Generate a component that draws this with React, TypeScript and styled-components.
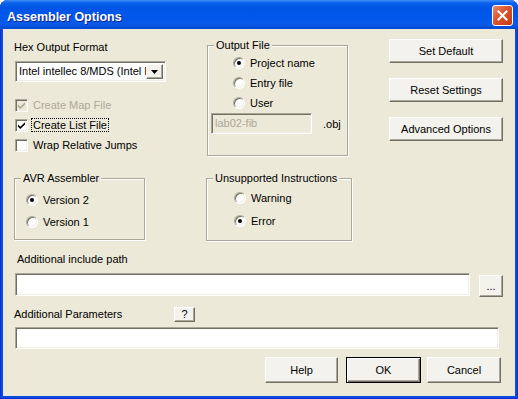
import React from "react";
import styled, { createGlobalStyle } from "styled-components";

const GlobalStyle = createGlobalStyle`
  html, body {
    margin: 0;
    padding: 0;
    background: #ffffff;
  }
  body {
    font-family: "Liberation Sans", Arial, sans-serif;
    font-size: 11px;
    color: #000;
  }
  * {
    box-sizing: border-box;
  }
`;

const Window = styled.div`
  width: 518px;
  height: 399px;
  display: flex;
  flex-direction: column;
  border-radius: 8px 8px 0 0;
  overflow: hidden;
  background: #0a4ce0;
  box-shadow: inset 1px 0 0 #0831d9, inset -1px 0 0 #0831d9, inset 0 -1px 0 #0831d9;
`;

const TitleBar = styled.div`
  height: 29px;
  flex-shrink: 0;
  display: flex;
  align-items: center;
  justify-content: space-between;
  padding: 2px 5px 0 7px;
  background: linear-gradient(
    to bottom,
    #3d8ff7 0px,
    #0a60ea 3px,
    #0055e5 8px,
    #0057ec 18px,
    #0a5ae8 24px,
    #0048d2 29px
  );
`;

const Title = styled.span`
  color: #fff;
  font-weight: bold;
  font-size: 12.5px;
  padding-top: 3px;
  text-shadow: 1px 1px 0 #0f1f8a;
`;

const CloseButton = styled.div`
  width: 21px;
  height: 21px;
  border: 1px solid #fff;
  border-radius: 3px;
  background: linear-gradient(135deg, #eb8a6c 0%, #d9542d 45%, #c63a13 100%);
  display: flex;
  align-items: center;
  justify-content: center;
`;

const Client = styled.div`
  flex: 1;
  margin: 0 3px 3px;
  background: #ece9d8;
  padding: 10px 14px 0 11px;
  display: flex;
  flex-direction: column;
`;

const TopGrid = styled.div`
  display: grid;
  grid-template-columns: 192px 183px 114px;
  row-gap: 16px;
  align-items: start;
`;

const Column = styled.div`
  display: flex;
  flex-direction: column;
`;

const Label = styled.div<{ $top?: number; $left?: number; $width?: number }>`
  line-height: 13px;
  margin-top: ${(p) => p.$top ?? 0}px;
  margin-left: ${(p) => p.$left ?? 0}px;
  ${(p) => (p.$width ? `width: ${p.$width}px; flex-shrink: 0;` : "")}
  white-space: nowrap;
`;

const sunken = `
  border: 1px solid;
  border-color: #aca899 #ffffff #ffffff #aca899;
  box-shadow: inset 1px 1px 0 #716f64, inset -1px -1px 0 #f1efe2;
`;

const raised = `
  border: 1px solid;
  border-color: #ffffff #716f64 #716f64 #ffffff;
  box-shadow: inset -1px -1px 0 #aca899;
  background: #f3f2ec;
`;

const SelectBox = styled.div`
  ${sunken}
  margin-top: 7px;
  margin-left: 1px;
  width: 151px;
  height: 21px;
  background: #fff;
  display: flex;
  align-items: stretch;
  padding: 2px;
`;

const SelectText = styled.div`
  flex: 1;
  overflow: hidden;
  white-space: nowrap;
  line-height: 15px;
  padding-left: 1px;
`;

const DropButton = styled.div`
  ${raised}
  width: 17px;
  display: flex;
  align-items: center;
  justify-content: center;
`;

const CheckList = styled.div`
  margin-top: 13px;
  display: flex;
  flex-direction: column;
`;

const CheckRow = styled.div`
  height: 20px;
  display: flex;
  align-items: center;
`;

const CheckBox = styled.span<{ $disabled?: boolean }>`
  ${sunken}
  width: 13px;
  height: 13px;
  margin-left: 1px;
  background: ${(p) => (p.$disabled ? "#ece9d8" : "#fff")};
  display: flex;
  align-items: center;
  justify-content: center;
  flex-shrink: 0;
`;

const OptionText = styled.span<{ $disabled?: boolean; $focused?: boolean }>`
  margin-left: 3px;
  padding: 0 1px;
  line-height: 12px;
  border: 1px dotted ${(p) => (p.$focused ? "#000" : "transparent")};
  color: ${(p) => (p.$disabled ? "#aca899" : "#000")};
  white-space: nowrap;
`;

const GroupBox = styled.fieldset<{ $width: number; $left?: number }>`
  margin: 0 0 0 ${(p) => p.$left ?? 0}px;
  padding: 0;
  width: ${(p) => p.$width}px;
  border: 1px solid #aca899;
  box-shadow: inset 1px 1px 0 #fff, 1px 1px 0 #fff;
  min-width: 0;
`;

const GroupTitle = styled.legend`
  margin-left: 6px;
  padding: 0 2px;
  line-height: 13px;
  background: #ece9d8;
`;

const GroupBody = styled.div<{ $pad: string }>`
  padding: ${(p) => p.$pad};
  display: flex;
  flex-direction: column;
`;

const RadioRow = styled.div<{ $indent: number; $height: number }>`
  height: ${(p) => p.$height}px;
  padding-left: ${(p) => p.$indent}px;
  display: flex;
  align-items: center;
`;

const Radio = styled.span<{ $checked?: boolean }>`
  width: 12px;
  height: 12px;
  border-radius: 50%;
  border: 1px solid;
  border-color: #aca899 #ffffff #ffffff #aca899;
  box-shadow: inset 1px 1px 0 #716f64, inset -1px -1px 0 #f1efe2;
  background: #fff;
  flex-shrink: 0;
  display: flex;
  align-items: center;
  justify-content: center;

  &::after {
    content: "";
    width: 4px;
    height: 4px;
    border-radius: 50%;
    background: ${(p) => (p.$checked ? "#000" : "transparent")};
  }
`;

const RadioText = styled.span`
  margin-left: 5px;
  line-height: 13px;
  white-space: nowrap;
`;

const FileRow = styled.div`
  display: flex;
  align-items: center;
  margin-left: 3px;
`;

const TextField = styled.div<{ $width: number; $height: number; $disabled?: boolean; $left?: number }>`
  ${sunken}
  width: ${(p) => p.$width}px;
  height: ${(p) => p.$height}px;
  margin-left: ${(p) => p.$left ?? 0}px;
  background: ${(p) => (p.$disabled ? "#ece9d8" : "#fff")};
  color: ${(p) => (p.$disabled ? "#aca899" : "#000")};
  padding: 3px 3px;
  line-height: 13px;
  flex-shrink: 0;
`;

const Suffix = styled.span`
  margin-left: 11px;
`;

const ButtonStack = styled.div`
  display: flex;
  flex-direction: column;
  gap: 15px;
`;

const Button = styled.div<{ $width: number; $height: number; $default?: boolean }>`
  ${raised}
  width: ${(p) => p.$width}px;
  height: ${(p) => p.$height}px;
  display: flex;
  align-items: center;
  justify-content: center;
  line-height: 13px;
  white-space: nowrap;
  flex-shrink: 0;
  ${(p) =>
    p.$default
      ? `border-color: #000;
         box-shadow: inset 1px 1px 0 #fff, inset -1px -1px 0 #716f64, inset -2px -2px 0 #aca899;`
      : ""}
`;

const Row = styled.div<{ $top: number; $gap?: number; $align?: string }>`
  display: flex;
  align-items: ${(p) => p.$align ?? "flex-start"};
  margin-top: ${(p) => p.$top}px;
  gap: ${(p) => p.$gap ?? 0}px;
`;

const SmallButtonWrap = styled.div`
  margin-top: 2px;
`;

const Footer = styled.div`
  display: flex;
  justify-content: flex-end;
  margin-top: 8px;
`;

const FooterGap = styled.span<{ $w: number }>`
  width: ${(p) => p.$w}px;
`;

const Check = ({ color }: { color: string }) => (
  <svg width="9" height="9" viewBox="0 0 9 9">
    <path d="M1 3.5 L3.3 5.8 L8 1.2 L8 3.4 L3.3 8 L1 5.7 Z" fill={color} />
  </svg>
);

export default function App() {
  return (
    <>
      <GlobalStyle />
      <Window>
        <TitleBar>
          <Title>Assembler Options</Title>
          <CloseButton>
            <svg width="11" height="11" viewBox="0 0 11 11">
              <path d="M1.5 1.5 L9.5 9.5 M9.5 1.5 L1.5 9.5" stroke="#fff" strokeWidth="2" strokeLinecap="square" />
            </svg>
          </CloseButton>
        </TitleBar>
        <Client>
          <TopGrid>
            <Column>
              <Label $top={2}>Hex Output Format</Label>
              <SelectBox>
                <SelectText>Intel intellec 8/MDS (Intel HEX)</SelectText>
                <DropButton>
                  <svg width="7" height="4" viewBox="0 0 7 4">
                    <path d="M0 0 H7 L3.5 4 Z" fill="#000" />
                  </svg>
                </DropButton>
              </SelectBox>
              <CheckList>
                <CheckRow>
                  <CheckBox $disabled>
                    <Check color="#aca899" />
                  </CheckBox>
                  <OptionText $disabled>Create Map File</OptionText>
                </CheckRow>
                <CheckRow>
                  <CheckBox>
                    <Check color="#000" />
                  </CheckBox>
                  <OptionText $focused>Create List File</OptionText>
                </CheckRow>
                <CheckRow>
                  <CheckBox />
                  <OptionText>Wrap Relative Jumps</OptionText>
                </CheckRow>
              </CheckList>
            </Column>

            <GroupBox $width={141} $left={1}>
              <GroupTitle>Output File</GroupTitle>
              <GroupBody $pad="1px 0 21px 0">
                <RadioRow $indent={25} $height={20}>
                  <Radio $checked />
                  <RadioText>Project name</RadioText>
                </RadioRow>
                <RadioRow $indent={25} $height={20}>
                  <Radio />
                  <RadioText>Entry file</RadioText>
                </RadioRow>
                <RadioRow $indent={25} $height={20}>
                  <Radio />
                  <RadioText>User</RadioText>
                </RadioRow>
                <FileRow>
                  <TextField $width={101} $height={21} $disabled>
                    lab02-fib
                  </TextField>
                  <Suffix>.obj</Suffix>
                </FileRow>
              </GroupBody>
            </GroupBox>

            <ButtonStack>
              <Button $width={114} $height={24}>Set Default</Button>
              <Button $width={114} $height={24}>Reset Settings</Button>
              <Button $width={114} $height={24}>Advanced Options</Button>
            </ButtonStack>

            <GroupBox $width={131}>
              <GroupTitle>AVR Assembler</GroupTitle>
              <GroupBody $pad="4px 0 6px 0">
                <RadioRow $indent={11} $height={22}>
                  <Radio $checked />
                  <RadioText>Version 2</RadioText>
                </RadioRow>
                <RadioRow $indent={11} $height={22}>
                  <Radio />
                  <RadioText>Version 1</RadioText>
                </RadioRow>
              </GroupBody>
            </GroupBox>

            <GroupBox $width={146}>
              <GroupTitle>Unsupported Instructions</GroupTitle>
              <GroupBody $pad="2px 0 7px 0">
                <RadioRow $indent={27} $height={22}>
                  <Radio />
                  <RadioText>Warning</RadioText>
                </RadioRow>
                <RadioRow $indent={27} $height={24}>
                  <Radio $checked />
                  <RadioText>Error</RadioText>
                </RadioRow>
              </GroupBody>
            </GroupBox>
          </TopGrid>

          <Label $top={12} $left={3}>Additional include path</Label>
          <Row $top={7} $gap={9}>
            <TextField $width={455} $height={23} $left={1} />
            <SmallButtonWrap>
              <Button $width={24} $height={22}>...</Button>
            </SmallButtonWrap>
          </Row>

          <Row $top={10} $align="center">
            <Label $width={160}>Additional Parameters</Label>
            <Button $width={21} $height={15}>?</Button>
          </Row>
          <Row $top={5}>
            <TextField $width={484} $height={22} $left={1} />
          </Row>

          <Footer>
            <Button $width={73} $height={26}>Help</Button>
            <FooterGap $w={8} />
            <Button $width={75} $height={26} $default>OK</Button>
            <FooterGap $w={6} />
            <Button $width={74} $height={26}>Cancel</Button>
          </Footer>
        </Client>
      </Window>
    </>
  );
}
